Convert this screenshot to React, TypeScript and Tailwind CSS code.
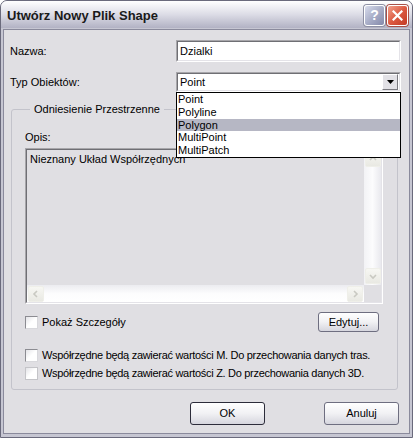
import { ReactNode } from "react";

const items = ["Point", "Polyline", "Polygon", "MultiPoint", "MultiPatch"];

function Sunken({ className = "", inner = "", children }: { className?: string; inner?: string; children?: ReactNode }) {
  return (
    <div className={`border border-t-[#a7a6aa] border-l-[#a7a6aa] border-r-white border-b-white ${className}`}>
      <div className={`h-full border border-t-[#6f6f74] border-l-[#6f6f74] border-r-[#e4e3e8] border-b-[#e4e3e8] ${inner}`}>
        {children}
      </div>
    </div>
  );
}

function CheckBox({ faded = false }: { faded?: boolean }) {
  return (
    <div
      className={`h-[13px] w-[13px] shrink-0 border ${
        faded ? "border-[#c4c4c8]" : "border-t-[#8c8c92] border-l-[#8c8c92] border-r-[#d8d8dc] border-b-[#d8d8dc]"
      } bg-gradient-to-br from-[#e4e4e8] via-white to-white`}
    />
  );
}

function Chevron({ dir }: { dir: "up" | "down" | "left" | "right" }) {
  const d = {
    up: "M2 6 L5 3 L8 6",
    down: "M2 4 L5 7 L8 4",
    left: "M6 2 L3 5 L6 8",
    right: "M4 2 L7 5 L4 8",
  }[dir];
  return (
    <svg width="10" height="10" viewBox="0 0 10 10">
      <path d={d} fill="none" stroke="#c9c9c2" strokeWidth="1.6" />
    </svg>
  );
}

function ScrollBtn({ dir }: { dir: "up" | "down" | "left" | "right" }) {
  return (
    <div className="flex h-[16px] w-[16px] shrink-0 items-center justify-center rounded-[2px] border border-[#efefe9] bg-gradient-to-b from-[#f7f7f3] to-[#e9e9e3]">
      <Chevron dir={dir} />
    </div>
  );
}

function XpButton({ children, def = false, className = "" }: { children: ReactNode; def?: boolean; className?: string }) {
  return (
    <div
      className={`flex items-center justify-center rounded-[3px] border ${
        def ? "border-[#2c2c3a]" : "border-[#6e6e80]"
      } bg-gradient-to-b from-white via-[#f1f1f4] to-[#d6d6de] text-black ${className}`}
    >
      {children}
    </div>
  );
}

export default function App() {
  return (
    <div className="h-[438px] w-[413px] bg-white font-['Liberation_Sans',Arial,sans-serif] text-[11px] leading-[13px] text-black">
      <div className="relative flex h-full flex-col rounded-t-[7px] border border-[#6a6a7c] bg-[#c6c6d2]">
        {/* title bar */}
        <div className="flex h-[27px] shrink-0 items-center rounded-t-[6px] bg-gradient-to-b from-white via-[#dcdce6] to-[#b2b2c4] pl-[6px] pr-[4px]">
          <span className="flex-1 pt-[2px] text-[13px] font-bold text-[#1a1a1a]">Utwórz Nowy Plik Shape</span>
          <div className="flex gap-[2px] pt-[2px]">
            <div className="flex h-[21px] w-[21px] items-center justify-center rounded-[3px] border border-white bg-gradient-to-br from-[#d8dcec] via-[#a9aec8] to-[#8489aa] text-[14px] font-bold text-white shadow-[0_0_0_1px_#8e90a4]">
              ?
            </div>
            <div className="flex h-[21px] w-[21px] items-center justify-center rounded-[3px] border border-white bg-gradient-to-br from-[#f0a08c] via-[#dc5a42] to-[#c23a24] shadow-[0_0_0_1px_#a85048]">
              <svg width="11" height="11" viewBox="0 0 11 11">
                <path d="M1.5 1.5 L9.5 9.5 M9.5 1.5 L1.5 9.5" stroke="white" strokeWidth="2.2" strokeLinecap="square" />
              </svg>
            </div>
          </div>
        </div>

        {/* client */}
        <div className="mx-[2px] mb-[3px] mt-[1px] flex flex-1 flex-col border border-[#8a8a9c] bg-[#e0dfe3] pl-[6px] pr-[8px]">
          <div className="mt-[10px] flex h-[22px] items-center">
            <span className="w-[166px]">Nazwa:</span>
            <Sunken className="h-[22px] flex-1" inner="bg-white flex items-center pl-[2px]">
              Dzialki
            </Sunken>
          </div>

          <div className="relative mt-[10px] flex h-[20px] items-center">
            <span className="w-[166px]">Typ Obiektów:</span>
            <Sunken className="h-[20px] flex-1" inner="bg-white flex items-center pl-[2px]">
              <span className="flex-1">Point</span>
              <div className="mr-[1px] flex h-[16px] w-[16px] items-center justify-center border border-t-white border-l-white border-r-[#7a7a80] border-b-[#7a7a80] bg-[#e2e1e6]">
                <svg width="7" height="4" viewBox="0 0 7 4">
                  <path d="M0 0 H7 L3.5 4 Z" fill="#000" />
                </svg>
              </div>
            </Sunken>

            {/* open list */}
            <div className="absolute left-[166px] right-0 top-[20px] z-10 border border-black bg-white">
              {items.map((item) => (
                <div key={item} className={`h-[12.8px] pl-[1px] leading-[13px] ${item === "Polygon" ? "bg-[#b6b7c4]" : ""}`}>
                  {item}
                </div>
              ))}
            </div>
          </div>

          <fieldset className="ml-[1px] mr-[3px] mt-[11px] rounded-[3px] border border-[#c3c3cb] pb-[9px] pl-[13px] pr-[14px]">
            <legend className="ml-[5px] px-[4px]">Odniesienie Przestrzenne</legend>
            <div className="mt-[15px]">Opis:</div>
            <Sunken className="mt-[4px] h-[156px]" inner="flex flex-col bg-[#e0dfe3]">
              <div className="flex flex-1">
                <div className="flex-1 pl-[3px] pt-[3px]">Nieznany Układ Współrzędnych</div>
                <div className="flex w-[17px] flex-col items-center bg-gradient-to-r from-[#f2f2f5] via-[#fcfcfd] to-[#e9e9ee] py-[1px]">
                  <ScrollBtn dir="up" />
                  <div className="flex-1" />
                  <ScrollBtn dir="down" />
                </div>
              </div>
              <div className="flex h-[17px]">
                <div className="flex flex-1 items-center bg-gradient-to-b from-[#ececf0] via-[#fcfcfd] to-white px-[1px]">
                  <ScrollBtn dir="left" />
                  <div className="flex-1" />
                  <ScrollBtn dir="right" />
                </div>
                <div className="w-[17px] bg-[#e0dfe3]" />
              </div>
            </Sunken>

            <div className="mt-[8px] flex h-[20px] items-center">
              <CheckBox />
              <span className="ml-[4px] flex-1">Pokaż Szczegóły</span>
              <XpButton className="mr-[4px] h-[20px] w-[61px]">Edytuj...</XpButton>
            </div>

            <div className="mt-[17px] flex items-center">
              <CheckBox />
              <span className="ml-[4px] whitespace-nowrap tracking-[-0.3px]">
                Współrzędne będą zawierać wartości M. Do przechowania danych tras.
              </span>
            </div>
            <div className="mt-[5px] flex items-center">
              <CheckBox faded />
              <span className="ml-[4px] whitespace-nowrap tracking-[-0.3px]">
                Współrzędne będą zawierać wartości Z. Do przechowania danych 3D.
              </span>
            </div>
          </fieldset>

          <div className="mt-[12px] flex justify-end gap-[59px] pr-[2px]">
            <XpButton def className="h-[23px] w-[75px]">OK</XpButton>
            <XpButton className="h-[23px] w-[75px]">Anuluj</XpButton>
          </div>
        </div>
      </div>
    </div>
  );
}
